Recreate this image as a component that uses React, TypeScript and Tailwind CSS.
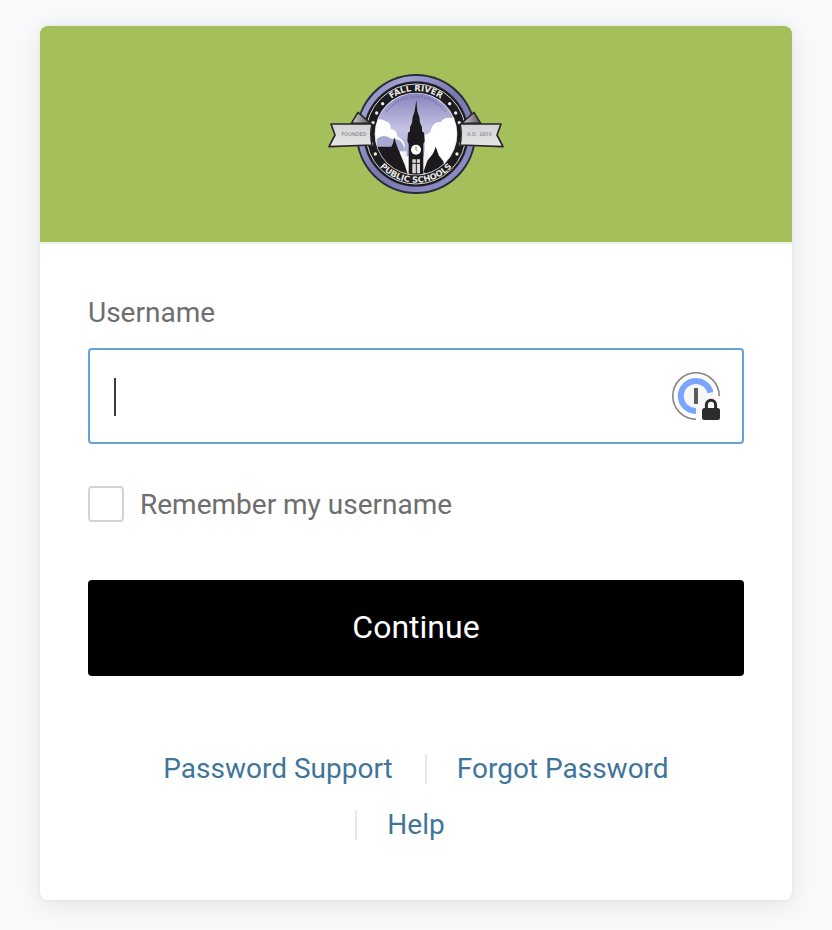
import { useState } from 'react';

const links = ['Password Support', 'Forgot Password', 'Help'];

const stars = [
  [188, 119], [170, 147], [159, 176], [155, 240], [166, 270],
  [389, 119], [407, 147], [418, 176], [421, 240], [411, 270],
];

function SchoolSeal() {
  return (
    <svg className="w-44 h-30" viewBox="24 30 528 360" role="img" aria-label="Fall River Public Schools">
      <defs>
        <linearGradient id="sky" x1="0" y1="0" x2="0" y2="1">
          <stop offset="0" stopColor="#8582bd" />
          <stop offset="0.45" stopColor="#c5c4e3" />
          <stop offset="0.75" stopColor="#a9a7d4" />
        </linearGradient>
        <linearGradient id="rim" x1="0" y1="0" x2="1" y2="1">
          <stop offset="0" stopColor="#7f81b8" />
          <stop offset="0.2" stopColor="#9fa1d4" />
          <stop offset="0.5" stopColor="#7779ad" />
          <stop offset="1" stopColor="#9092cb" />
        </linearGradient>
        <linearGradient id="fold" x1="0" y1="0" x2="1" y2="0">
          <stop offset="0" stopColor="#d5d5d5" />
          <stop offset="1" stopColor="#555" />
        </linearGradient>
        <linearGradient id="ribbon" x1="0" y1="0" x2="0" y2="1">
          <stop offset="0" stopColor="#d2d3d6" />
          <stop offset="1" stopColor="#e6e6e8" />
        </linearGradient>
        <clipPath id="window">
          <circle cx="288" cy="210" r="122" />
        </clipPath>
        <path id="arcTop" d="M159 210a129 129 0 0 1 258 0" />
        <path id="arcBottom" d="M142 210a146 146 0 0 0 292 0" />
      </defs>

      <circle cx="288" cy="210" r="180" fill="#2b2a36" />
      <circle cx="288" cy="210" r="166" fill="none" stroke="url(#rim)" strokeWidth="16" />
      <circle cx="288" cy="210" r="156" fill="#1d1b1e" />
      <circle cx="288" cy="210" r="150" fill="none" stroke="#d6d6d6" strokeWidth="3" />
      <circle cx="288" cy="210" r="124" fill="#f2f2f5" />

      <g clipPath="url(#window)">
        <rect x="160" y="85" width="256" height="250" fill="url(#sky)" />
        <path
          d="M160 172q20-12 37 0q16 4 15 22q21 4 20 24q16 4 22 24v35h60v-65q18-2 20-18q8-22 28-20q12-16 32-12l30-14v200H160z"
          fill="#fff"
        />
        <path d="M170 225q20-18 46 0q30-4 38 30v45h-84z" fill="#a9a8d3" />
        <path d="M240 262h20v70h-20zM312 262h12v70h-12z" fill="#f2f2f5" />
        <path d="M160 248h54l5-10l4-18l5 18l6 16l20 48l10 30H160z" fill="#1b191b" />
        <path d="M310 325l12-35l16-20l4-8l5-14l5 14l4 12l14 18l4 20l-30 30z" fill="#1b191b" />
        <path
          d="M289 108l3 34l6 18l2 16l6 14v12l6 4l2 26l-4 8v95h-44v-95l-4-8l2-26l6-4v-12l6-14l2-16l6-18z"
          fill="#1b191b"
        />
        <circle cx="288" cy="257" r="15" fill="#fff" />
        <path d="M288 247v10l5 5" fill="none" stroke="#333" strokeWidth="2" />
        <path d="M277 286h23v42h-23z" fill="#d8d8d8" />
        <path d="M289 284v46M275 298h27" stroke="#1b191b" strokeWidth="3" />
        <path d="M200 142a111 111 0 0 1 176 0" fill="none" stroke="#5f5c8c" strokeWidth="6" strokeDasharray="4 5" opacity="0.5" />
      </g>

      <g fill="#e9e9e9" fontSize="25" textAnchor="middle" fontFamily="DejaVu Sans, sans-serif" fontWeight="700">
        <text>
          <textPath href="#arcTop" startOffset="50%">FALL RIVER</textPath>
        </text>
        <text>
          <textPath href="#arcBottom" startOffset="50%">PUBLIC SCHOOLS</textPath>
        </text>
      </g>
      {stars.map(([x, y]) => (
        <circle key={`${x}-${y}`} cx={x} cy={y} r="5" fill="#eee" />
      ))}

      <g stroke="#29272a" strokeWidth="5" strokeLinejoin="round">
        <path d="M94 178l20-33l38 33z" fill="url(#fold)" />
        <path d="M482 178l-20-33l-38 33z" fill="url(#fold)" />
        <path d="M33 180H156q-7 31 0 63L27 248l18-35z" fill="url(#ribbon)" />
        <path d="M543 180H420q7 31 0 63L549 248l-18-35z" fill="url(#ribbon)" />
      </g>
      <g fill="#77777c" fontSize="15" textAnchor="middle" fontFamily="DejaVu Sans, sans-serif">
        <text x="102" y="217">FOUNDED</text>
        <text x="478" y="217">A.D. 1803</text>
      </g>
    </svg>
  );
}

function LockedKeyIcon() {
  return (
    <svg className="w-12 h-12" viewBox="0 0 48 48" fill="none" aria-hidden="true">
      <circle cx="24" cy="24" r="18" fill="#f7f7f7" />
      <path d="M24 47.2A23.2 23.2 0 1 1 47.2 24" stroke="#8b8580" strokeWidth="1.6" />
      <path d="M24 39A15 15 0 1 1 38.4 20.6" stroke="#7aa5ff" strokeWidth="6" />
      <path d="M24 16v16" stroke="#5c5c58" strokeWidth="4" />
      <path d="M34.4 37v-4.2a4.6 4.6 0 0 1 9.2 0V37" stroke="#2c2c2c" strokeWidth="3" />
      <rect x="30" y="36" width="18" height="12" rx="2.5" fill="#2c2c2c" />
    </svg>
  );
}

export default function App() {
  const [username, setUsername] = useState('');
  const [remember, setRemember] = useState(false);

  return (
    <main className="min-h-screen bg-[#f9fafc] px-10 pt-[26px] pb-[30px] font-[Roboto,sans-serif] text-[28px] leading-[30px] text-[#6e6e6e]">
      <div className="bg-white rounded-lg overflow-hidden shadow-[0_4px_28px_rgba(0,0,0,0.10),0_0_4px_rgba(0,0,0,0.06)]">
        <header className="flex justify-center py-12 bg-[#a5bf5a]">
          <SchoolSeal />
        </header>

        <form
          onSubmit={(e) => e.preventDefault()}
          className="border-t-2 border-[#eef0ea] px-12 pt-12 pb-[34px]"
        >
          <label htmlFor="username" className="block leading-[42px] mb-[14px]">Username</label>
          <div className="relative">
            <input
              id="username"
              type="text"
              value={username}
              onChange={(e) => setUsername(e.target.value)}
              className="block w-full h-24 pl-6 pr-20 bg-white border-2 border-[#65a2d6] rounded outline-none text-[#333]"
            />
            {!username && (
              <span className="absolute left-[26px] top-[30px] w-0.5 h-[38px] bg-[#3c3c3c] pointer-events-none" />
            )}
            <span className="absolute right-6 top-6 pointer-events-none">
              <LockedKeyIcon />
            </span>
          </div>

          <div className="flex items-center gap-4 mt-[42px]">
            <input
              id="remember"
              type="checkbox"
              checked={remember}
              onChange={(e) => setRemember(e.target.checked)}
              className="appearance-none size-9 bg-white border-2 border-[#d3d3d3] rounded checked:bg-[#65a2d6]"
            />
            <label htmlFor="remember" className="pt-0.5">Remember my username</label>
          </div>

          <button type="submit" className="block w-full h-24 mt-[58px] pb-0.5 bg-black rounded text-white text-[32px]">
            Continue
          </button>

          <ul className="flex flex-wrap justify-center mt-[78px]">
            {links.map((link) => (
              <li key={link} className="pl-[30px] pr-8 mb-[26px] border-l-2 border-[#e8e8e8] first:border-transparent">
                <a href="#" className="text-[#3f759b] hover:underline">{link}</a>
              </li>
            ))}
          </ul>
        </form>
      </div>
    </main>
  );
}
